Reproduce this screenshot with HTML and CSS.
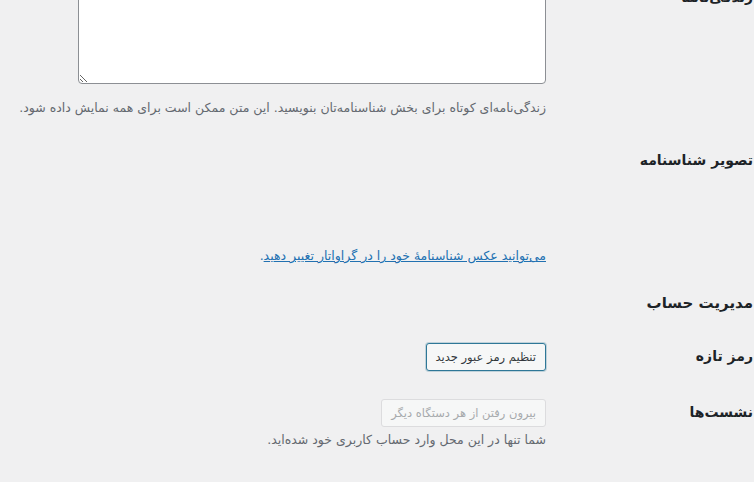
FILE: index.html
```html
<!DOCTYPE html>
<html lang="fa" dir="rtl">
<head>
<meta charset="utf-8">
<title>نمایه</title>
<link rel="stylesheet" href="styles.css">
</head>
<body>
<div class="wrap">
  <div class="form-table">
    <div class="row row-bio">
      <div class="th"><label for="description">زندگی‌نامه</label></div>
      <div class="td">
        <textarea id="description" class="bio"></textarea>
        <p class="description">زندگی‌نامه‌ای کوتاه برای بخش شناسنامه‌تان بنویسید. این متن ممکن است برای همه نمایش داده شود.</p>
      </div>
    </div>
    <div class="row">
      <div class="th"><span class="label">تصویر شناسنامه</span></div>
      <div class="td">
        <div class="avatar"></div>
        <p class="avatar-note"><a href="#">می‌توانید عکس شناسنامهٔ خود را در گراواتار تغییر دهید</a>.</p>
      </div>
    </div>
  </div>

  <h2 class="section-title">مدیریت حساب</h2>
  <div class="form-table">
    <div class="row row-pass">
      <div class="th"><span class="label">رمز تازه</span></div>
      <div class="td">
        <button type="button" class="button button-focus">تنظیم رمز عبور جدید</button>
      </div>
    </div>
    <div class="row">
      <div class="th"><span class="label">نشست‌ها</span></div>
      <div class="td">
        <button type="button" class="button" disabled>بیرون رفتن از هر دستگاه دیگر</button>
        <p class="description tight">شما تنها در این محل وارد حساب کاربری خود شده‌اید.</p>
      </div>
    </div>
  </div>

  <h2 class="section-title section-last">رمزهای عبور برنامه</h2>
</div>
</body>
</html>
```

FILE: styles.css
```css
html, body {
  margin: 0;
  padding: 0;
  background: #f0f0f1;
}

body {
  direction: rtl;
  font-family: "DejaVu Sans", sans-serif;
  font-size: 12.5px;
  color: #3c434a;
  overflow: hidden;
}

.wrap {
  margin-top: -31px;
  padding: 0 1px 0 0;
}

.row {
  display: grid;
  grid-template-columns: 197px 1fr;
}

.th {
  padding: 19px 0 0 0;
  font-size: 14px;
  line-height: 19px;
  font-weight: bold;
  color: #1d2327;
  text-align: right;
}

.td {
  padding: 15px 10px 15px 10px;
}

.row-pass .td {
  padding-bottom: 13px;
}

.bio {
  display: block;
  width: 468px;
  height: 100px;
  box-sizing: border-box;
  margin: 0;
  padding: 2px 6px;
  border: 1px solid #8c8f94;
  border-radius: 4px;
  background: #fff;
  font-family: inherit;
  font-size: 14px;
  resize: both;
}

.description {
  margin: 14px 0 0 0;
  line-height: 19px;
  color: #646970;
  white-space: nowrap;
}

.description.tight {
  margin-top: 3px;
}

.avatar {
  height: 96px;
}

.avatar-note {
  margin: 3px 0 0 0;
  line-height: 19px;
  color: #2271b1;
}

.avatar-note a {
  color: #2271b1;
  text-decoration: underline;
}

.section-title {
  margin: 12px 0 14px 0;
  font-size: 15px;
  line-height: 22px;
  font-weight: bold;
  color: #1d2327;
}

.section-last {
  margin-top: 14px;
}

.button {
  display: inline-block;
  box-sizing: border-box;
  height: 28px;
  margin: 0;
  padding: 0 9px;
  border: 1px solid #2e7797;
  border-radius: 3px;
  background: #f6f7f7;
  color: #32373c;
  font-family: inherit;
  font-size: 11.5px;
  line-height: 26px;
  cursor: pointer;
}

.button-focus {
  box-shadow: 0 0 0 1px rgba(46, 119, 151, 0.25);
}

.button:disabled {
  border-color: #dcdcde;
  color: #a7aaad;
  background: #f6f7f7;
  cursor: default;
}
```
